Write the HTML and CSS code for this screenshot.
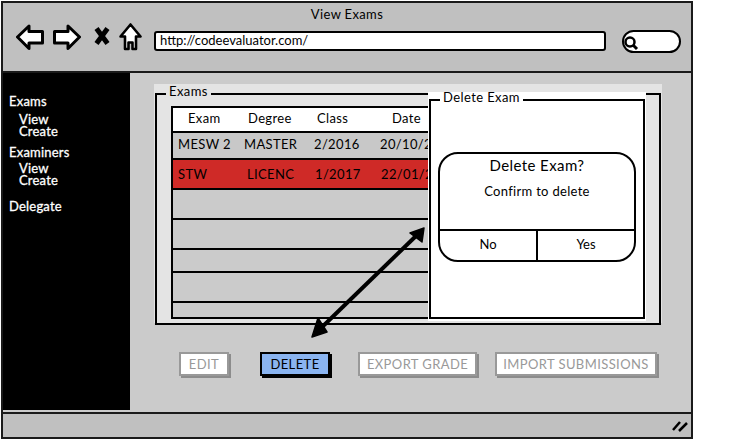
FILE: index.html
```html
<!DOCTYPE html>
<html lang="en">
<head>
<meta charset="utf-8">
<title>View Exams</title>
<link rel="stylesheet" href="styles.css">
</head>
<body>
<div class="window">
  <header class="chrome">
    <div class="title">View Exams</div>
    <div class="toolbar">
      <div class="icons">
        <svg class="icon" width="28" height="26" viewBox="0 0 28 26"><path d="M1.500 13 L13 2 V7.500 H26.500 V19 H13 V24.500 Z" fill="#fff" stroke="#000" stroke-width="3" stroke-linejoin="round"/></svg>
        <svg class="icon" width="28" height="26" viewBox="0 0 28 26"><path d="M26.500 13 L15 2 V7.500 H1.500 V19 H15 V24.500 Z" fill="#fff" stroke="#000" stroke-width="3" stroke-linejoin="round"/></svg>
        <svg class="icon" width="16" height="20" viewBox="0 0 16 20"><path d="M2.500 2.500 L13.500 17.500 M13.500 2.500 L2.500 17.500" fill="none" stroke="#000" stroke-width="5"/></svg>
        <svg class="icon" width="23" height="28" viewBox="0 0 23 28"><path d="M11.500 1.500 L21.500 13.500 H17 V26 H13.500 V19.500 H9.500 V26 H6 V13.500 H1.500 Z" fill="#fff" stroke="#000" stroke-width="2.600" stroke-linejoin="round"/></svg>
      </div>
      <div class="url">http://codeevaluator.com/</div>
      <div class="search">
        <svg width="16" height="16" viewBox="0 0 16 16"><circle cx="6" cy="7" r="4.500" fill="none" stroke="#000" stroke-width="2.500"/><path d="M9 10 L13 14" stroke="#000" stroke-width="3"/></svg>
      </div>
    </div>
  </header>
  <div class="middle">
    <nav class="sidebar">
      <div class="nav-group nav-exams">
        <div class="nav-head">Exams</div>
        <div class="nav-sub">View</div>
        <div class="nav-sub">Create</div>
      </div>
      <div class="nav-group nav-examiners">
        <div class="nav-head">Examiners</div>
        <div class="nav-sub">View</div>
        <div class="nav-sub">Create</div>
      </div>
      <div class="nav-group">
        <div class="nav-head">Delegate</div>
      </div>
    </nav>
    <main class="content">
      <div class="panel">
        <fieldset class="exams">
          <legend>Exams</legend>
          <table class="grid">
            <thead>
              <tr class="row-head"><th>Exam</th><th>Degree</th><th>Class</th><th>Date</th><th></th></tr>
            </thead>
            <tbody>
              <tr class="row-a"><td>MESW 2</td><td>MASTER</td><td>2/2016</td><td>20/10/2016</td><td></td></tr>
              <tr class="row-b"><td>STW</td><td>LICENC</td><td>1/2017</td><td>22/01/2017</td><td></td></tr>
              <tr class="row-c"><td colspan="5"></td></tr>
              <tr class="row-d"><td colspan="5"></td></tr>
              <tr class="row-e"><td colspan="5"></td></tr>
              <tr class="row-f"><td colspan="5"></td></tr>
              <tr class="row-g"><td colspan="5"></td></tr>
            </tbody>
          </table>
        </fieldset>
      </div>
      <div class="actions">
        <button class="btn btn-edit">EDIT</button>
        <button class="btn btn-delete">DELETE</button>
        <button class="btn btn-export">EXPORT GRADE</button>
        <button class="btn btn-import">IMPORT SUBMISSIONS</button>
      </div>
    </main>
  </div>
  <footer class="status">
    <svg width="16" height="12" viewBox="0 0 16 12"><path d="M1 10 L8 2 M7 11 L15 3" stroke="#000" stroke-width="2.500" fill="none"/></svg>
  </footer>
  <div class="dialog">
    <fieldset class="dialog-frame">
      <legend>Delete Exam</legend>
      <div class="confirm">
        <div class="confirm-body">
          <div class="confirm-title">Delete Exam?</div>
          <div class="confirm-text">Confirm to delete</div>
        </div>
        <div class="confirm-actions">
          <div class="confirm-btn">No</div>
          <div class="confirm-btn">Yes</div>
        </div>
      </div>
    </fieldset>
  </div>
  <svg class="arrow" width="130" height="125" viewBox="0 0 130 125">
    <path d="M10 106 L108 11" stroke="#000" stroke-width="4" fill="none"/>
    <path d="M3 113 L9 94 L18 108 Z M115 4 L101 9 L113 18 Z" fill="#000" stroke="#000" stroke-width="1.500" stroke-linejoin="round"/>
  </svg>
</div>
</body>
</html>
```

FILE: styles.css
```css
* { box-sizing: border-box; }

html, body { margin: 0; padding: 0; background: #fff; }

body {
  width: 733px;
  height: 441px;
  overflow: hidden;
  font-family: "Lato", "Noto Sans", sans-serif;
  font-size: 13px;
  color: #000;
}

.window {
  position: relative;
  margin: 1px 0 0 1px;
  width: 692px;
  height: 438px;
  border: 2px solid #1a1a1a;
  display: flex;
  flex-direction: column;
  background: #c0c0c0;
}

.chrome {
  height: 70px;
  flex: none;
  background: #c0c0c0;
  border-bottom: 2px solid #1a1a1a;
}

.title {
  text-align: center;
  font-size: 13px;
  line-height: 16px;
  padding-top: 3px;
  letter-spacing: .35px;
}

.toolbar {
  display: flex;
  align-items: center;
  height: 34px;
  margin-top: 2px;
  padding-left: 13px;
}

.icons {
  display: flex;
  align-items: center;
  gap: 9px;
  width: 138px;
  margin-bottom: 8px;
}

.icon:nth-child(3) { margin-left: 4px; margin-top: -2px; }

.url {
  width: 452px;
  height: 20px;
  background: #fff;
  border: 2px solid #000;
  border-radius: 3px;
  padding-left: 4px;
  font-size: 13px;
  line-height: 15px;
}

.search {
  width: 59px;
  height: 23px;
  margin-left: 16px;
  background: #fff;
  border: 2px solid #000;
  border-radius: 12px;
  padding: 3px 0 0 0;
  line-height: 0;
}

.middle {
  flex: 1;
  display: flex;
  min-height: 0;
  background: #cbcbcb;
}

.sidebar {
  width: 127px;
  height: 337px;
  flex: none;
  background: #000;
  color: #fff;
  padding: 21px 0 0 6px;
  font-size: 13px;
  line-height: 12px;
  -webkit-text-stroke: .3px #fff;
}

.nav-exams { margin-bottom: 8px; }
.nav-examiners { margin-bottom: 13px; }

.nav-head { line-height: 14px; margin-bottom: 5px; letter-spacing: .2px; }
.nav-examiners .nav-head { margin-bottom: 3px; }

.nav-sub { padding-left: 10px; letter-spacing: .2px; }

.content {
  flex: 1;
  padding: 13px 0 0 24px;
  min-width: 0;
}

.panel {
  width: 508px;
  height: 239px;
  background: #e4e4e4;
}

.exams {
  margin: -2px 0 0 1px;
  padding: 2px 14px 0 14px;
  width: 506px;
  height: 241px;
  border: 2px solid #000;
  border-radius: 0;
  min-width: 0;
}

.exams legend {
  margin-left: -5px;
  padding: 0 3px 6px;
  font-size: 13px;
  line-height: 14px;
  letter-spacing: .4px;
}

.grid {
  width: 474px;
  border-collapse: collapse;
  table-layout: fixed;
  font-size: 13px;
  border: 2px solid #000;
}

.grid th, .grid td {
  padding: 0;
  font-weight: 400;
  white-space: nowrap;
  border-bottom: 2px solid #000;
  letter-spacing: .35px;
  text-align: left;
}

.grid th { padding-bottom: 3px; }

.grid th:nth-child(1) { width: 72px; padding-left: 15px; }
.grid th:nth-child(2) { width: 70px; padding-left: 4px; }
.grid th:nth-child(3) { width: 66px; padding-left: 3px; }
.grid th:nth-child(4) { width: 110px; padding-left: 12px; }

.grid td { padding-left: 5px; }
.grid td:nth-child(2) { padding-left: 0; }
.grid td:nth-child(3) { padding-left: 0; }
.grid td:nth-child(4) { padding-left: 0; }

.row-head { height: 25px; background: #fff; }
.row-a { height: 27px; background: #c8c8c8; }
.row-b { height: 30px; background: #cf2a27; }
.row-c { height: 30px; background: #cbcbcb; }
.row-d { height: 30px; background: #cbcbcb; }
.row-e { height: 23px; background: #cbcbcb; }
.row-f { height: 30px; background: #cbcbcb; }
.row-g { height: 16px; background: #cbcbcb; }

.grid .row-a td { padding-bottom: 3px; }
.grid .row-b td:nth-child(2) { padding-left: 3px; }
.grid .row-b td:nth-child(3) { padding-left: 1px; }
.grid .row-b td:nth-child(4) { padding-left: 1px; }

.actions {
  display: flex;
  margin-top: 29px;
  padding-left: 25px;
  gap: 29px;
}

.btn {
  height: 24px;
  padding: 0;
  font: inherit;
  font-size: 13px;
  letter-spacing: .4px;
  background: #fff;
  color: #999;
  border: 2px solid #999;
  box-shadow: 2px 2px 0 #8c8c8c;
}

.btn-edit { width: 50px; margin-right: 2px; }

.btn-delete {
  width: 70px;
  margin-right: -1px;
  background: #8ab4f0;
  color: #000;
  border-color: #000;
  box-shadow: 2px 2px 0 #000;
}

.btn-export { width: 119px; margin-right: -11px; }
.btn-import { width: 162px; }

.status {
  height: 25px;
  flex: none;
  background: #c0c0c0;
  border-top: 2px solid #1a1a1a;
  display: flex;
  justify-content: flex-end;
  align-items: center;
  padding-right: 3px;
}

.dialog {
  position: absolute;
  left: 425px;
  top: 89px;
  width: 218px;
  height: 229px;
  background: #fff;
}

.dialog-frame {
  margin: -2px 0 0 1px;
  padding: 42px 7px 0 7px;
  height: 229px;
  width: 216px;
  border: 2px solid #000;
  min-width: 0;
}

.dialog-frame legend {
  margin-left: 2px;
  padding: 0 3px 6px;
  font-size: 13px;
  line-height: 14px;
  letter-spacing: .4px;
}

.confirm {
  height: 110px;
  border: 2px solid #000;
  border-radius: 20px;
  display: flex;
  flex-direction: column;
  text-align: center;
}

.confirm-body { flex: 1; }

.confirm-title {
  font-size: 15px;
  line-height: 18px;
  margin-top: 2px;
  letter-spacing: .4px;
}

.confirm-text {
  font-size: 13px;
  line-height: 16px;
  margin-top: 9px;
  letter-spacing: .3px;
}

.confirm-actions {
  height: 31px;
  flex: none;
  display: grid;
  grid-template-columns: 96px 1fr;
  border-top: 2px solid #000;
  font-size: 13px;
  line-height: 26px;
}

.confirm-btn + .confirm-btn { border-left: 2px solid #000; }

.arrow {
  position: absolute;
  left: 306px;
  top: 221px;
}
```
